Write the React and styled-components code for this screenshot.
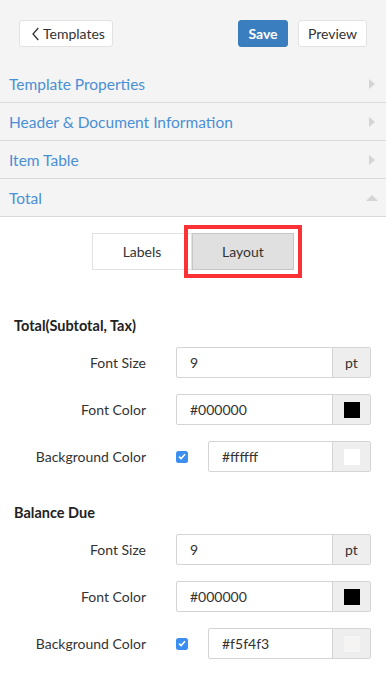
import React from "react";
import styled, { createGlobalStyle } from "styled-components";

const GlobalStyle = createGlobalStyle`
  html, body { margin: 0; padding: 0; background: #ffffff; }
  body { font-family: "Lato", "Liberation Sans", sans-serif; color: #333; }
  * { box-sizing: border-box; }
`;

const Page = styled.div`
  width: 386px;
  min-height: 685px;
  background: #fff;
`;

const TopBar = styled.div`
  background: #f4f4f4;
  display: flex;
  align-items: center;
  padding: 20px 19px 18px 19px;
`;

const Button = styled.button`
  height: 27px;
  width: ${(p) => p.$w}px;
  padding: 0 0 0 ${(p) => p.$pl || 0}px;
  border-radius: 3px;
  font-family: inherit;
  font-size: 14px;
  display: inline-flex;
  align-items: center;
  justify-content: ${(p) => (p.$pl ? "flex-start" : "center")};
  gap: 4px;
  cursor: pointer;
  border: 1px solid ${(p) => (p.$primary ? "#3a7dbd" : "#e2e2e2")};
  background: ${(p) => (p.$primary ? "#3b7ec0" : "#ffffff")};
  color: ${(p) => (p.$primary ? "#ffffff" : "#333")};
  font-weight: ${(p) => (p.$primary ? 700 : 400)};
  margin-left: ${(p) => p.$ml || 0}px;
`;

const Spacer = styled.div`
  flex: 1;
`;

const Accordion = styled.div`
  background: #f4f4f4;
`;

const AccRow = styled.div`
  height: 38px;
  border-bottom: 1px solid #dadada;
  display: flex;
  align-items: center;
  justify-content: space-between;
  padding: 0 8px 0 9px;
  color: #4a8fd6;
  font-size: 15.5px;
`;

const Arrow = styled.span`
  width: 12px;
  display: flex;
  justify-content: center;
  align-items: center;
`;

const TabsWrap = styled.div`
  display: flex;
  justify-content: center;
  padding-top: 16px;
`;

const Tab = styled.div`
  height: 37px;
  width: ${(p) => p.$w}px;
  display: flex;
  align-items: center;
  justify-content: center;
  font-size: 14px;
  color: #333;
  border: 1px solid ${(p) => (p.$active ? "#c6c6c6" : "#e2e2e2")};
  background: ${(p) => (p.$active ? "#e0e0e0" : "#fff")};
  outline: ${(p) => (p.$active ? "4px solid #fb3235" : "none")};
  outline-offset: 4px;
`;

const Section = styled.div`
  padding: 0 15px 0 14px;
  margin-top: ${(p) => p.$mt}px;
`;

const SectionTitle = styled.div`
  font-weight: 700;
  font-size: 14.5px;
  line-height: 20px;
  color: #222;
  margin-bottom: 11px;
`;

const Rows = styled.div`
  display: flex;
  flex-direction: column;
  gap: 16px;
`;

const Row = styled.div`
  display: grid;
  grid-template-columns: 132px 1fr;
  column-gap: 30px;
  align-items: center;
`;

const Label = styled.div`
  text-align: right;
  font-size: 14px;
  color: #333;
`;

const Field = styled.div`
  display: flex;
  align-items: center;
`;

const Check = styled.span`
  width: 12px;
  height: 12px;
  border-radius: 2.5px;
  background: #3c8ef0;
  display: inline-flex;
  align-items: center;
  justify-content: center;
  margin-right: 20px;
  flex-shrink: 0;
`;

const InputGroup = styled.div`
  flex: 1;
  height: 31px;
  display: flex;
  border: 1px solid #d4d4d4;
  border-radius: 2px;
  background: #fff;
`;

const InputText = styled.div`
  flex: 1;
  display: flex;
  align-items: center;
  padding-left: 13px;
  font-size: 14px;
  color: #333;
`;

const Addon = styled.div`
  width: 38px;
  border-left: 1px solid #d4d4d4;
  background: #eeeeee;
  display: flex;
  align-items: center;
  justify-content: center;
  font-size: 14px;
  color: #333;
`;

const Swatch = styled.span`
  width: 16px;
  height: 16px;
  background: ${(p) => p.$c};
`;

const ChevronLeft = () => (
  <svg width="7" height="14" viewBox="0 0 7 14">
    <path d="M6.3 1 L1 7 L6.3 13" fill="none" stroke="#333" strokeWidth="1.3" />
  </svg>
);

const TriRight = () => (
  <svg width="6" height="10" viewBox="0 0 6 10">
    <path d="M0 0 L6 5 L0 10 Z" fill="#d4d4d4" />
  </svg>
);

const TriUp = () => (
  <svg width="12" height="6" viewBox="0 0 12 6">
    <path d="M0 6 L6 0 L12 6 Z" fill="#d4d4d4" />
  </svg>
);

const CheckMark = () => (
  <svg width="8" height="7" viewBox="0 0 8 7">
    <path d="M1 3.6 L3.1 5.6 L7 1.2" fill="none" stroke="#fff" strokeWidth="1.5" />
  </svg>
);

const FieldRow = ({ label, value, addon, checkbox }) => (
  <Row>
    <Label>{label}</Label>
    <Field>
      {checkbox && (
        <Check>
          <CheckMark />
        </Check>
      )}
      <InputGroup>
        <InputText>{value}</InputText>
        <Addon>{addon}</Addon>
      </InputGroup>
    </Field>
  </Row>
);

const sections = [
  { title: "Total(Subtotal, Tax)", bg: "#ffffff", mt: 46 },
  { title: "Balance Due", bg: "#f5f4f3", mt: 31 },
];

export default function App() {
  return (
    <Page>
      <GlobalStyle />
      <TopBar>
        <Button $w={94} $pl={12}>
          <ChevronLeft />
          Templates
        </Button>
        <Spacer />
        <Button $primary $w={50}>Save</Button>
        <Button $ml={10} $w={69}>Preview</Button>
      </TopBar>
      <Accordion>
        <AccRow>
          Template Properties
          <Arrow><TriRight /></Arrow>
        </AccRow>
        <AccRow>
          Header &amp; Document Information
          <Arrow><TriRight /></Arrow>
        </AccRow>
        <AccRow>
          Item Table
          <Arrow><TriRight /></Arrow>
        </AccRow>
        <AccRow>
          Total
          <Arrow><TriUp /></Arrow>
        </AccRow>
      </Accordion>
      <TabsWrap>
        <Tab $w={100}>Labels</Tab>
        <Tab $w={102} $active>Layout</Tab>
      </TabsWrap>
      {sections.map((s) => (
        <Section key={s.title} $mt={s.mt}>
          <SectionTitle>{s.title}</SectionTitle>
          <Rows>
            <FieldRow label="Font Size" value="9" addon="pt" />
            <FieldRow label="Font Color" value="#000000" addon={<Swatch $c="#000000" />} />
            <FieldRow
              label="Background Color"
              value={s.bg}
              checkbox
              addon={<Swatch $c={s.bg} />}
            />
          </Rows>
        </Section>
      ))}
    </Page>
  );
}
